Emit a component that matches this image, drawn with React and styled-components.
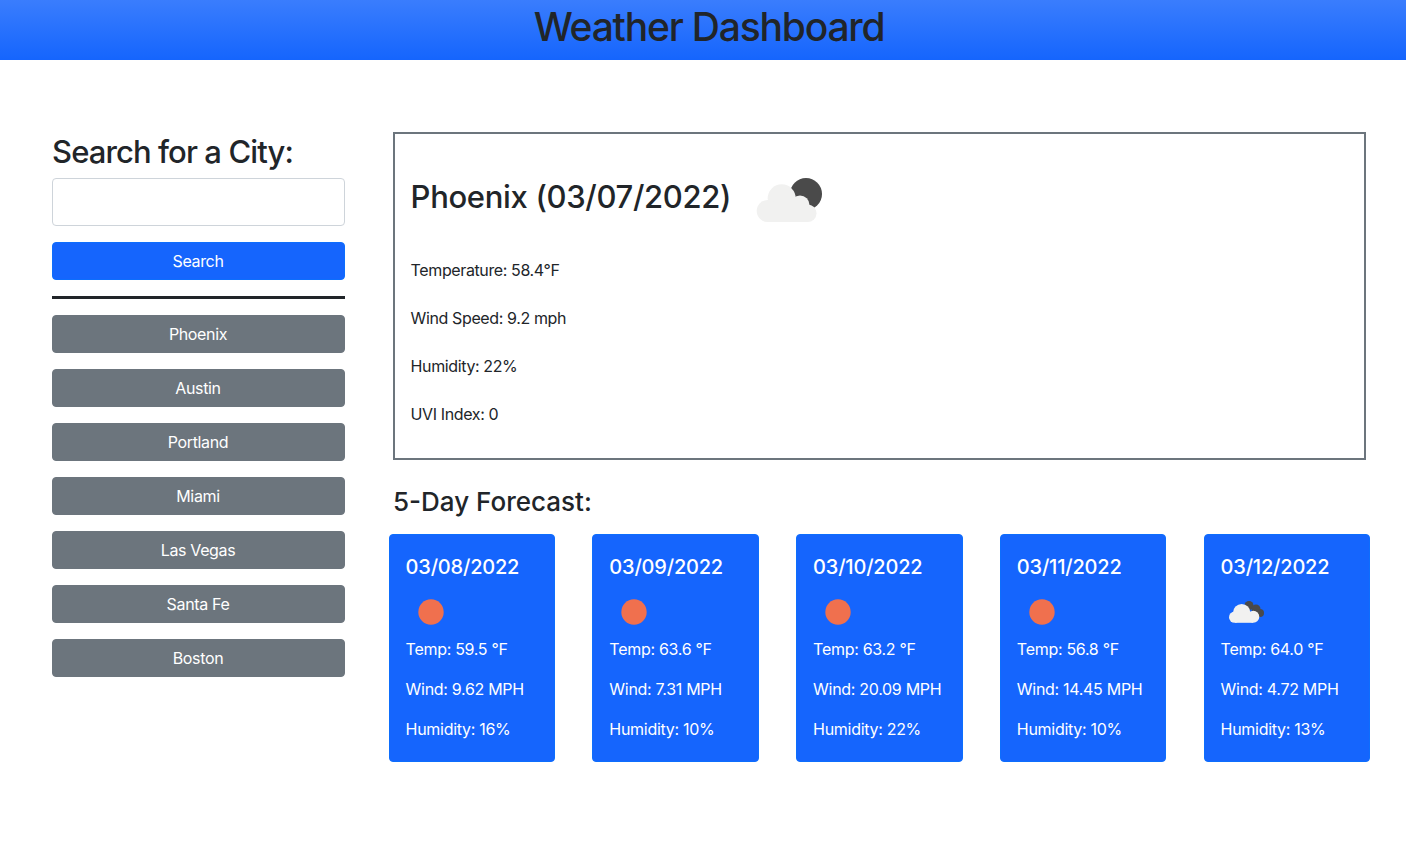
import React from "react";
import styled, { createGlobalStyle } from "styled-components";

const Global = createGlobalStyle`
  html, body { margin: 0; padding: 0; background: #fff; }
  body { font-family: Inter, "Liberation Sans", sans-serif; font-size: 16px; line-height: 24px; color: #212529; }
  * { box-sizing: border-box; }
`;

const Header = styled.header`
  height: 60px;
  background: linear-gradient(180deg, #3a7dfd 0%, #1565fd 100%);
  display: flex;
  justify-content: center;
  padding-left: 12px;
`;
const Title = styled.h1`
  margin: 0;
  font-size: 39px;
  line-height: 54px;
  font-weight: 500;
  letter-spacing: -1.2px;
  color: #212529;
`;
const Main = styled.main`
  display: flex;
  gap: 48px;
  padding: 72px 36px 0 52px;
  align-items: flex-start;
`;
const Sidebar = styled.aside`
  width: 293px;
  flex: none;
  display: flex;
  flex-direction: column;
`;
const SideTitle = styled.h2`
  margin: 0;
  height: 46px;
  font-size: 31px;
  line-height: 40px;
  font-weight: 500;
  letter-spacing: -0.9px;
`;
const SearchInput = styled.input`
  display: block;
  width: 100%;
  height: 48px;
  border: 1px solid #ced4da;
  border-radius: 4px;
  background: #fff;
  margin-bottom: 16px;
`;
const Button = styled.button`
  display: block;
  width: 100%;
  height: 38px;
  border: 1px solid ${(p) => (p.$primary ? "#0d6efd" : "#6c757d")};
  background: ${(p) => (p.$primary ? "#1565fd" : "#6c757d")};
  color: #fff;
  font: inherit;
  letter-spacing: -0.35px;
  border-radius: 4px;
  padding: 0 1px 0 0;
`;
const Rule = styled.hr`
  margin: 16px 0;
  height: 3px;
  border: 0;
  background: #212529;
`;
const CityList = styled.div`
  display: flex;
  flex-direction: column;
  gap: 16px;
`;
const Content = styled.section`
  width: 973px;
  flex: none;
`;
const Current = styled.div`
  height: 328px;
  border: 2px solid #6c757d;
  padding: 40px 16px 0 15.6px;
`;
const CurrentHead = styled.div`
  display: flex;
  align-items: center;
  gap: 20px;
  height: 48px;
  margin-bottom: 36px;
`;
const CityName = styled.h2`
  margin: 0 0 2px;
  font-size: 31px;
  line-height: 44px;
  font-weight: 500;
  letter-spacing: -0.33px;
`;
const IconSvg = styled.svg`
  display: block;
  flex: none;
`;
const Stat = styled.p`
  margin: 0 0 24px;
  font-size: 16px;
  line-height: 24px;
  letter-spacing: -0.38px;
`;
const ForecastTitle = styled.h3`
  margin: 25px 0 15px;
  font-size: 26px;
  line-height: 34px;
  font-weight: 500;
`;
const Cards = styled.div`
  display: flex;
  justify-content: space-between;
  margin: 0 -4px 0 -4.4px;
`;
const Card = styled.article`
  width: 166.4px;
  height: 228px;
  background: #1565fd;
  border: 1px solid #0d6efd;
  border-radius: 4px;
  padding: 16px;
  color: #fff;
`;
const CardDate = styled.h5`
  margin: 0;
  font-size: 20px;
  line-height: 32px;
  font-weight: 500;
  letter-spacing: -0.2px;
`;
const CardIcon = styled.div`
  height: 54px;
  padding-top: 4px;
`;
const CardLine = styled.p`
  margin: 0 0 16px;
  font-size: 16px;
  line-height: 24px;
  letter-spacing: -0.3px;
  white-space: nowrap;
`;

const BigCloud = () => (
  <IconSvg width="80" height="56" viewBox="0 0 80 56">
    <circle cx="55" cy="24" r="16" fill="#4a4a4a" />
    <g fill="#f1f1f0">
      <circle cx="30.7" cy="28.3" r="14" />
      <circle cx="16.7" cy="41" r="11" />
      <circle cx="49" cy="35" r="9.5" />
      <circle cx="56.7" cy="43.3" r="8.8" />
      <rect x="17" y="35" width="40" height="17" />
    </g>
  </IconSvg>
);

const Sun = () => (
  <IconSvg width="50" height="50" viewBox="0 0 50 50">
    <circle cx="25" cy="25" r="12.7" fill="#f0704e" />
  </IconSvg>
);

const SmallCloud = () => (
  <IconSvg width="50" height="50" viewBox="0 0 50 50">
    <g fill="#4a4a4a">
      <circle cx="28" cy="18.5" r="4.5" />
      <circle cx="35" cy="22" r="4.5" />
      <circle cx="39" cy="26" r="4" />
    </g>
    <g fill="#f1f1f0">
      <circle cx="20.7" cy="25.7" r="8.7" />
      <circle cx="13.6" cy="30.2" r="5.6" />
      <circle cx="32.3" cy="29.7" r="6" />
      <rect x="14" y="28" width="18" height="7.8" />
    </g>
  </IconSvg>
);

const cities = ["Phoenix", "Austin", "Portland", "Miami", "Las Vegas", "Santa Fe", "Boston"];
const forecast = [
  { d: "03/08/2022", t: "59.5", w: "9.62", h: 16 },
  { d: "03/09/2022", t: "63.6", w: "7.31", h: 10 },
  { d: "03/10/2022", t: "63.2", w: "20.09", h: 22 },
  { d: "03/11/2022", t: "56.8", w: "14.45", h: 10 },
  { d: "03/12/2022", t: "64.0", w: "4.72", h: 13, cloud: true },
];

export default function App() {
  return (
    <>
      <Global />
      <Header>
        <Title>Weather Dashboard</Title>
      </Header>
      <Main>
        <Sidebar>
          <SideTitle>Search for a City:</SideTitle>
          <SearchInput aria-label="City" />
          <Button $primary>Search</Button>
          <Rule />
          <CityList>
            {cities.map((c) => (
              <Button key={c}>{c}</Button>
            ))}
          </CityList>
        </Sidebar>
        <Content>
          <Current>
            <CurrentHead>
              <CityName>Phoenix (03/07/2022)</CityName>
              <BigCloud />
            </CurrentHead>
            <Stat>Temperature: 58.4°F</Stat>
            <Stat>Wind Speed: 9.2 mph</Stat>
            <Stat>Humidity: 22%</Stat>
            <Stat>UVI Index: 0</Stat>
          </Current>
          <ForecastTitle>5-Day Forecast:</ForecastTitle>
          <Cards>
            {forecast.map((f) => (
              <Card key={f.d}>
                <CardDate>{f.d}</CardDate>
                <CardIcon>{f.cloud ? <SmallCloud /> : <Sun />}</CardIcon>
                <CardLine>Temp: {f.t} °F</CardLine>
                <CardLine>Wind: {f.w} MPH</CardLine>
                <CardLine>Humidity: {f.h}%</CardLine>
              </Card>
            ))}
          </Cards>
        </Content>
      </Main>
    </>
  );
}
